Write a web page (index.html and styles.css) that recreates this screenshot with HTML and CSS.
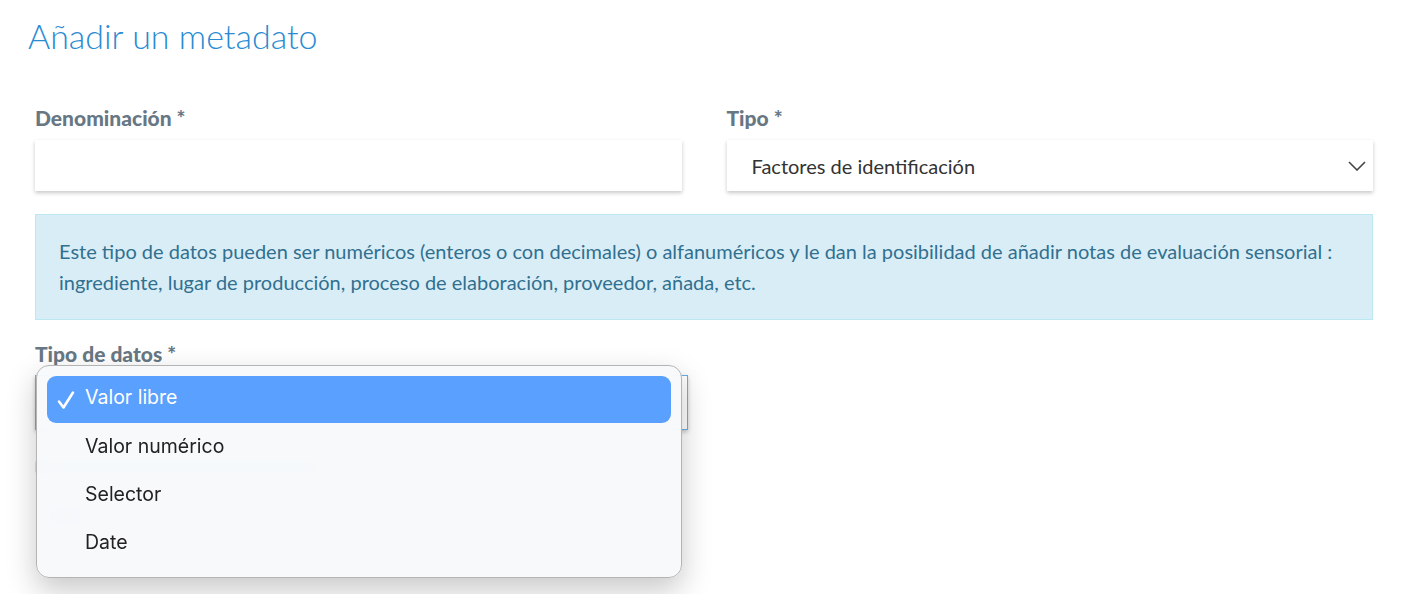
FILE: index.html
```html
<!DOCTYPE html>
<html lang="es">
<head>
<meta charset="utf-8">
<title>Añadir un metadato</title>
<link rel="stylesheet" href="styles.css">
</head>
<body>
<div class="page">
  <h1 class="title">Añadir un metadato</h1>
  <form class="form">
    <div class="row">
      <div class="field">
        <label class="label">Denominación *</label>
        <div class="input"></div>
      </div>
      <div class="field">
        <label class="label">Tipo *</label>
        <div class="input select">
          <span>Factores de identificación</span>
          <svg class="chev" width="18" height="10" viewBox="0 0 18 10"><path d="M1 1l8 8 8-8" fill="none" stroke="#444" stroke-width="1.6"/></svg>
        </div>
      </div>
    </div>
    <div class="info">Este tipo de datos pueden ser numéricos (enteros o con decimales) o alfanuméricos y le dan la posibilidad de añadir notas de evaluación sensorial : ingrediente, lugar de producción, proceso de elaboración, proveedor, añada, etc.</div>
    <div class="row">
      <div class="field datafield">
        <label class="label">Tipo de datos *</label>
        <div class="input focus"></div>
        <div class="ghost-label"></div>
        <div class="ghost-small"></div>
        <div class="popup">
          <div class="opt sel"><svg class="check" width="20" height="20" viewBox="0 0 20 20"><path d="M3 11.5l4.5 6L17 2.5" fill="none" stroke="#fff" stroke-width="2.6" stroke-linecap="round" stroke-linejoin="round"/></svg>Valor libre</div>
          <div class="opt">Valor numérico</div>
          <div class="opt">Selector</div>
          <div class="opt">Date</div>
        </div>
      </div>
      <div class="field"></div>
    </div>
  </form>
</div>
</body>
</html>
```
FILE: styles.css
```css
html, body { margin: 0; padding: 0; background: #fff; }
body { font-family: Lato, "Source Sans Pro", sans-serif; min-height: 594px; }
.page { padding: 16px 37px 0 35px; min-height: 594px; box-sizing: border-box; }
.title {
  margin: 0 0 0 -7px;
  font-weight: 300;
  font-size: 34px;
  line-height: 40px;
  color: #2a8bd3;
}
.form { margin-top: 51px; }
.row { display: grid; grid-template-columns: 1fr 1fr; column-gap: 45px; }
.field { display: flex; flex-direction: column; position: relative; }
.label {
  font-weight: 900;
  font-size: 21px;
  line-height: 22px;
  color: #677784;
  margin-bottom: 11px;
}
.input {
  height: 51px;
  background: #fff;
  box-shadow: 0 2px 4px rgba(0,0,0,0.22);
  box-sizing: border-box;
}
.select {
  display: flex; align-items: center; justify-content: space-between;
  padding: 0 7px 0 25px;
  font-size: 20px; color: #333;
}
.info {
  margin: 23px 0 23px;
  background: #d9edf7;
  border: 1px solid #bce8f1;
  color: #31708f;
  font-size: 20px;
  line-height: 31px;
  padding: 21px 24px 21px 23px;
}
.datafield .label { margin-bottom: 10px; }
.focus { border: 1px solid #66afe9; height: 55px; width: 653px; }
.ghost-label { margin-top: 30px; width: 290px; height: 14px; background: #dfe3e7; border-radius: 4px; }
.ghost-small { margin: 30px 0 0 10px; width: 40px; height: 24px; background: #e4e7ea; border-radius: 3px; }
.popup {
  position: absolute;
  left: 1px; top: 22px;
  width: 646px;
  height: 213px;
  box-sizing: border-box;
  padding: 10px 10px;
  border-radius: 13px;
  border: 1px solid #b4b4b4;
  background: rgba(247, 249, 251, 0.95);
  backdrop-filter: blur(8px);
  box-shadow: 0 12px 30px rgba(0,0,0,0.22);
  font-family: Inter, "Liberation Sans", sans-serif;
}
.opt {
  height: 48px;
  box-sizing: border-box;
  display: flex; align-items: center;
  padding: 0 0 5px 38px;
  font-size: 19.5px;
  color: #222;
  position: relative;
}
.opt.sel {
  background: #5aa0fe;
  color: #fff;
  border-radius: 9px;
  height: 47px;
  margin-bottom: 1px;
}
.check {
  position: absolute; left: 9px; top: 14px;
}
```
